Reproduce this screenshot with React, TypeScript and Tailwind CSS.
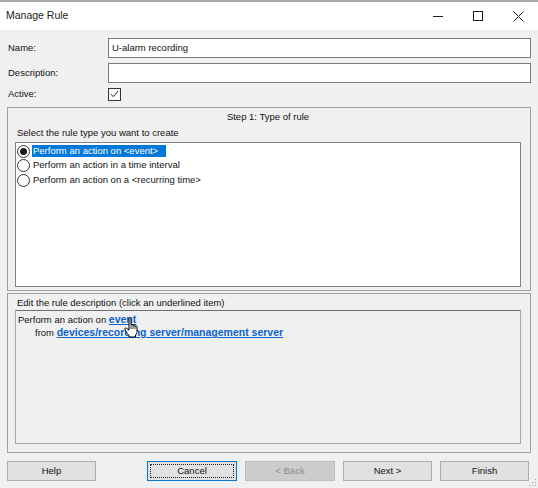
import React from 'react';

const font = { fontFamily: '"Liberation Sans", Arial, sans-serif' };

const Radio = ({ checked }: { checked?: boolean }) => (
  <span className="w-[13px] h-[13px] rounded-full border border-[#333333] bg-white flex items-center justify-center shrink-0">
    {checked && <span className="w-[7px] h-[7px] rounded-full bg-[#1a1a1a]"></span>}
  </span>
);

const Button = ({ label, variant }: { label: string; variant?: 'default' | 'disabled' }) => {
  if (variant === 'default') {
    return (
      <div className="w-[90px] h-[20px] border border-[#0078d7] bg-[#e1e1e1] p-[2px]">
        <div className="w-full h-full border border-dotted border-[#222222] flex items-center justify-center text-[#111111]">
          {label}
        </div>
      </div>
    );
  }
  if (variant === 'disabled') {
    return (
      <div className="w-[90px] h-[20px] border border-[#bfbfbf] bg-[#cccccc] flex items-center justify-center text-[#8a8a8a]">
        {label}
      </div>
    );
  }
  return (
    <div className="w-[89px] h-[20px] border border-[#adadad] bg-[#e1e1e1] flex items-center justify-center text-[#111111]">
      {label}
    </div>
  );
};

const HandCursor = () => (
  <svg width="15" height="21" viewBox="0 0 15 21" className="absolute left-[108px] top-[6px]">
    <path
      d="M5 1.5 C5 0.6 7 0.6 7 1.5 V8 C7 7.2 9 7.2 9 8 V8.8 C9 8 11 8 11 8.8 V9.6 C11 8.8 13 8.8 13 9.6 V14.5 C13 16 12.3 17 11.5 18 V20 H5 V18.5 C4 17.5 2.8 16 2 14.5 L0.9 12.4 C0.4 11.3 1.8 10.5 2.7 11.3 L5 13.2 Z"
      fill="#ffffff"
      stroke="#000000"
      strokeWidth="1"
      strokeLinejoin="round"
    />
    <path d="M7 8 V12 M9 8.8 V12 M11 9.6 V12" stroke="#000000" strokeWidth="0.8" fill="none" />
  </svg>
);

export default function App() {
  return (
    <div className="w-[538px] h-[488px] bg-[#f0f0f0] flex flex-col overflow-hidden text-[9.5px] text-[#111111] relative" style={font}>
      {/* Title bar */}
      <div className="h-[2px] bg-[#a9a9a9]"></div>
      <div className="h-[28px] bg-white flex items-center justify-between pl-[6px]">
        <span className="text-[10.5px] text-[#222222]">Manage Rule</span>
        <div className="flex items-center h-full">
          <div className="w-[40px] h-full flex items-center justify-center">
            <div className="w-[10px] h-px bg-[#222222]"></div>
          </div>
          <div className="w-[40px] h-full flex items-center justify-center">
            <div className="w-[10px] h-[10px] border border-[#222222]"></div>
          </div>
          <div className="w-[40px] h-full flex items-center justify-center">
            <svg width="11" height="11" viewBox="0 0 11 11">
              <path d="M0.5 0.5 L10.5 10.5 M10.5 0.5 L0.5 10.5" stroke="#222222" strokeWidth="1" />
            </svg>
          </div>
        </div>
      </div>

      {/* Fields */}
      <div className="grid grid-cols-[100px_1fr] gap-y-[5px] pl-[8px] pr-[7px] pt-[8px] items-center">
        <span>Name:</span>
        <div className="h-[20px] border border-[#7a7a7a] bg-white flex items-center px-[3px]">U-alarm recording</div>
        <span>Description:</span>
        <div className="h-[20px] border border-[#7a7a7a] bg-white"></div>
        <span className="-mt-[1px]">Active:</span>
        <div className="h-[14px] flex items-center -mt-[1px]">
          <div className="w-[13px] h-[13px] border border-[#333333] bg-white flex items-center justify-center">
            <svg width="9" height="8" viewBox="0 0 9 8">
              <path d="M0.7 4 L3.3 6.6 L8.3 0.8" stroke="#222222" strokeWidth="1" fill="none" />
            </svg>
          </div>
        </div>
      </div>

      {/* Step 1 group */}
      <div className="mx-[7px] mt-[6px] h-[184px] border border-[#a0a0a0] flex flex-col pl-[7px] pr-[9px] pb-[3px]">
        <div className="text-center pt-[3px] leading-[12px]">Step 1: Type of rule</div>
        <div className="pt-[4px] leading-[12px] pl-[2px]">Select the rule type you want to create</div>
        <div className="mt-[3px] flex-1 border border-[#828282] bg-white flex flex-col pt-[1px]">
          <div className="flex items-center h-[14px] pl-px gap-[2px]">
            <Radio checked />
            <span className="bg-[#0078d7] text-white h-[12px] flex items-center pl-px pr-[8px]">Perform an action on &lt;event&gt;</span>
          </div>
          <div className="flex items-center h-[14.5px] pl-px gap-[2px]">
            <Radio />
            <span className="pl-px">Perform an action in a time interval</span>
          </div>
          <div className="flex items-center h-[14.5px] pl-px gap-[2px]">
            <Radio />
            <span className="pl-px">Perform an action on a &lt;recurring time&gt;</span>
          </div>
        </div>
      </div>

      {/* Description group */}
      <div className="mx-[7px] mt-[2px] h-[160px] border border-[#a0a0a0] flex flex-col pl-[7px] pr-[9px] pb-[8px]">
        <div className="pt-[3px] leading-[12px] pl-[2px]">Edit the rule description (click an underlined item)</div>
        <div className="mt-[1px] flex-1 border border-[#a8a8a8] border-t-[#6e6e6e] bg-[#f0f0f0] relative pl-[2px] pt-[2px]">
          <div className="leading-[12px]">
            Perform an action on{' '}
            <span className="text-[#0b63ce] font-bold underline text-[10.5px]">event</span>
          </div>
          <div className="leading-[12px] pl-[17px]">
            from{' '}
            <span className="text-[#0b63ce] font-bold underline text-[10.5px]">devices/recording server/management server</span>
          </div>
          <HandCursor />
        </div>
      </div>

      {/* Buttons */}
      <div className="flex items-center pl-[7px] mt-[8px]">
        <Button label="Help" />
        <div className="ml-[51px] flex gap-[8px]">
          <Button label="Cancel" variant="default" />
          <Button label="< Back" variant="disabled" />
          <Button label="Next >" />
          <Button label="Finish" />
        </div>
      </div>

      {/* Size grip */}
      <svg width="8" height="8" viewBox="0 0 8 8" className="absolute right-[1px] bottom-[1px]">
        <rect x="6" y="0" width="1" height="1" fill="#a0a0a0" />
        <rect x="3" y="3" width="1" height="1" fill="#a0a0a0" />
        <rect x="6" y="3" width="1" height="1" fill="#a0a0a0" />
        <rect x="0" y="6" width="1" height="1" fill="#a0a0a0" />
        <rect x="3" y="6" width="1" height="1" fill="#a0a0a0" />
        <rect x="6" y="6" width="1" height="1" fill="#a0a0a0" />
      </svg>
    </div>
  );
}
